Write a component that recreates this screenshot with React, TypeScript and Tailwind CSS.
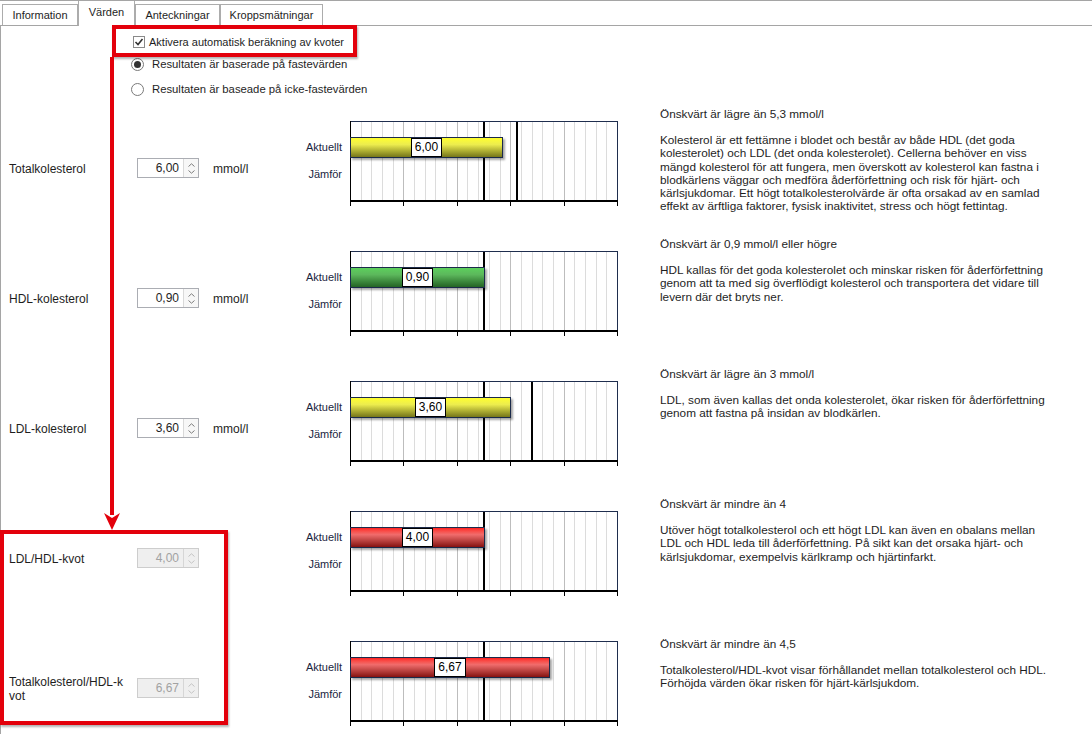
import { FC, ReactNode } from "react";
import clsx from "clsx";

type BarColor = "yellow" | "green" | "red";

interface Row {
  label: ReactNode;
  value: string;
  unit: boolean;
  disabled: boolean;
  bar: number;
  marks: number[];
  color: BarColor;
  heading: string;
  text: string[];
  textTop: string;
}

const barClass: Record<BarColor, string> = {
  yellow: "bg-linear-to-b from-[#ffff2a] via-[#ecec4e] via-35% to-[#76761a]",
  green: "bg-linear-to-b from-[#5cd05c] via-[#5cb85c] via-35% to-[#246424]",
  red: "bg-linear-to-b from-[#ff1c1c] via-[#f06c6c] via-35% to-[#861010]",
};

const rows: Row[] = [
  {
    label: "Totalkolesterol",
    value: "6,00",
    unit: true,
    disabled: false,
    bar: 152,
    marks: [134, 167],
    color: "yellow",
    heading: "Önskvärt är lägre än 5,3 mmol/l",
    text: [
      "Kolesterol är ett fettämne i blodet och består av både HDL (det goda",
      "kolesterolet) och LDL (det onda kolesterolet). Cellerna behöver en viss",
      "mängd kolesterol för att fungera, men överskott av kolesterol kan fastna i",
      "blodkärlens väggar och medföra åderförfettning och risk för hjärt- och",
      "kärlsjukdomar. Ett högt totalkolesterolvärde är ofta orsakad av en samlad",
      "effekt av ärftliga faktorer, fysisk inaktivitet, stress och högt fettintag.",
    ],
    textTop: "pt-[1px]",
  },
  {
    label: "HDL-kolesterol",
    value: "0,90",
    unit: true,
    disabled: false,
    bar: 134,
    marks: [134],
    color: "green",
    heading: "Önskvärt är 0,9 mmol/l eller högre",
    text: [
      "HDL kallas för det goda kolesterolet och minskar risken för åderförfettning",
      "genom att ta med sig överflödigt kolesterol och transportera det vidare till",
      "levern där det bryts ner.",
    ],
    textTop: "pt-[1px]",
  },
  {
    label: "LDL-kolesterol",
    value: "3,60",
    unit: true,
    disabled: false,
    bar: 160,
    marks: [134, 182],
    color: "yellow",
    heading: "Önskvärt är lägre än 3 mmol/l",
    text: [
      "LDL, som även kallas det onda kolesterolet, ökar risken för åderförfettning",
      "genom att fastna på insidan av blodkärlen.",
    ],
    textTop: "pt-[1px]",
  },
  {
    label: "LDL/HDL-kvot",
    value: "4,00",
    unit: false,
    disabled: true,
    bar: 134,
    marks: [134],
    color: "red",
    heading: "Önskvärt är mindre än 4",
    text: [
      "Utöver högt totalkolesterol och ett högt LDL kan även en obalans mellan",
      "LDL och HDL leda till åderförfettning. På sikt kan det orsaka hjärt- och",
      "kärlsjukdomar, exempelvis kärlkramp och hjärtinfarkt.",
    ],
    textTop: "pt-[1px]",
  },
  {
    label: (
      <>
        Totalkolesterol/HDL-k
        <br />
        vot
      </>
    ),
    value: "6,67",
    unit: false,
    disabled: true,
    bar: 199,
    marks: [134],
    color: "red",
    heading: "Önskvärt är mindre än 4,5",
    text: [
      "Totalkolesterol/HDL-kvot visar förhållandet mellan totalkolesterol och HDL.",
      "Förhöjda värden ökar risken för hjärt-kärlsjukdom.",
    ],
    textTop: "pt-[11px]",
  },
];

const tabs = [
  { name: "Information", w: "w-[76px]" },
  { name: "Värden", w: "w-[57px]" },
  { name: "Anteckningar", w: "w-[85px]" },
  { name: "Kroppsmätningar", w: "w-[103px]" },
];

const Spinner: FC<{ value: string; disabled: boolean }> = ({ value, disabled }) => {
  const arrow = disabled ? "#c4c4c4" : "#7c7c7c";
  return (
    <div
      className={clsx(
        "flex h-[20px] w-[62px] border",
        disabled ? "border-[#cdcdcd] bg-[#efefef] text-[#a2a2a2]" : "border-[#abadb3] bg-white text-[#1e1e1e]"
      )}
    >
      <div className="flex-1 pr-[4px] text-right text-[12px] leading-[18px]">{value}</div>
      <div
        className={clsx(
          "flex w-[15px] flex-col items-center justify-center gap-[3px] border-l",
          disabled ? "border-[#d6d6d6]" : "border-[#d9d9d9] bg-[#f7f7f7]"
        )}
      >
        <svg width="7" height="4" viewBox="0 0 7 4">
          <path d="M0.5 3.5 L3.5 0.8 L6.5 3.5" fill="none" stroke={arrow} strokeWidth="1" />
        </svg>
        <svg width="7" height="4" viewBox="0 0 7 4">
          <path d="M0.5 0.5 L3.5 3.2 L6.5 0.5" fill="none" stroke={arrow} strokeWidth="1" />
        </svg>
      </div>
    </div>
  );
};

// 25 minor steps across the plot, every fifth one darker
const gridX = Array.from({ length: 24 }, (_, i) => i + 1);

const Chart: FC<{ bar: number; marks: number[]; color: BarColor; value: string }> = ({ bar, marks, color, value }) => (
  <div className="relative h-[85px] w-[268px]">
    <svg width="268" height="85" className="block">
      <rect x="0.5" y="0.5" width="267" height="80" fill="#fff" stroke="#1f2e4e" />
      {gridX.map((i) => {
        const x = Math.round((i * 267) / 25) + 0.5;
        return (
          <line key={i} x1={x} x2={x} y1="1" y2="80" stroke={i % 5 === 0 ? "#bdbdbd" : "#dcdcdc"} strokeWidth="1" />
        );
      })}
      {marks.map((m) => (
        <line key={m} x1={m} x2={m} y1="1" y2="80" stroke="#000" strokeWidth="2" />
      ))}
      <line x1="0.5" x2="0.5" y1="0" y2="81" stroke="#000" strokeWidth="1" />
      <line x1="0" x2="268" y1="80" y2="80" stroke="#000" strokeWidth="2" />
      {[0, 5, 10, 15, 20, 25].map((i) => {
        const x = Math.min(Math.round((i * 267) / 25) + 0.5, 267.5);
        return <line key={i} x1={x} x2={x} y1="81" y2="85" stroke="#000" strokeWidth="1" />;
      })}
    </svg>
    <div
      className={clsx(
        "absolute left-0 top-[16px] flex h-[21px] items-center justify-center border border-[#1b2a4a] shadow-[2px_2px_2px_rgba(0,0,0,0.35)]",
        barClass[color]
      )}
      style={{ width: bar + 1 }}
    >
      <div className="h-[19px] border border-black bg-white px-[3px] text-[12px] leading-[17px] text-black">{value}</div>
    </div>
  </div>
);

export default function App() {
  return (
    <div className="relative h-[734px] w-[1092px] overflow-hidden bg-white font-['Liberation_Sans',Arial,sans-serif] text-[11px] text-[#1e1e1e]">
      {/* tab strip */}
      <div className="flex h-[26px] items-end border-y border-[#a5a5a5] pl-[2px]">
        {tabs.map((t) =>
          t.name === "Värden" ? (
            <div
              key={t.name}
              className={clsx(
                "relative -mb-px flex h-[25px] items-center justify-center border-x border-[#acacac] bg-white pb-[3px]",
                t.w
              )}
            >
              {t.name}
            </div>
          ) : (
            <div
              key={t.name}
              className={clsx(
                "flex h-[21px] items-center justify-center border-x border-t border-[#acacac] bg-white pt-px",
                t.w
              )}
            >
              {t.name}
            </div>
          )
        )}
      </div>

      <div className="h-[708px] border-l border-[#a5a5a5]">
        {/* calculation options */}
        <div className="h-[80px] pt-[10px]">
          <div className="ml-[132px] flex h-[12px] items-center gap-[4px]">
            <div className="flex h-[12px] w-[12px] items-center justify-center border border-[#8a8a8a] bg-white">
              <svg width="10" height="10" viewBox="0 0 10 10">
                <path d="M1.5 5 L4 7.5 L8.5 2" fill="none" stroke="#333" strokeWidth="1.6" />
              </svg>
            </div>
            <span className="whitespace-nowrap">Aktivera automatisk beräkning av kvoter</span>
          </div>
          <div className="ml-[130px] mt-[10px] flex h-[13px] items-center gap-[8px]">
            <div className="flex h-[13px] w-[13px] items-center justify-center rounded-full border border-[#7a7a7a] bg-white">
              <div className="h-[7px] w-[7px] rounded-full bg-[#333]" />
            </div>
            <span className="whitespace-nowrap text-[11.3px]">Resultaten är baserade på fastevärden</span>
          </div>
          <div className="ml-[130px] mt-[12px] flex h-[13px] items-center gap-[8px]">
            <div className="h-[13px] w-[13px] rounded-full border border-[#7a7a7a] bg-white" />
            <span className="whitespace-nowrap text-[11.3px]">Resultaten är baseade på icke-fastevärden</span>
          </div>
        </div>

        {rows.map((r, idx) => (
          <div key={idx} className="flex h-[130px]">
            <div className="mt-[49px] flex h-[28px] w-[136px] items-center pl-[8px] text-[12px] leading-[14px]">
              <span>{r.label}</span>
            </div>
            <div className="mt-[52px]">
              <Spinner value={r.value} disabled={r.disabled} />
            </div>
            <div className="mt-[56px] w-[97px] pl-[14px] text-[12px] leading-[14px]">{r.unit ? "mmol/l" : ""}</div>
            <div className="mt-[15px] flex">
              <div className="w-[54px] pr-[8px] pt-[19px] text-right leading-[14px] text-[#1a2540]">
                <div>Aktuellt</div>
                <div className="mt-[13px]">Jämför</div>
              </div>
              <Chart bar={r.bar} marks={r.marks} color={r.color} value={r.value} />
            </div>
            <div className={clsx("ml-[42px] whitespace-nowrap text-[11.75px] leading-[13.2px]", r.textTop)}>
              <div>{r.heading}</div>
              <div className="mt-[13px]">
                {r.text.map((line, i) => (
                  <div key={i}>{line}</div>
                ))}
              </div>
            </div>
          </div>
        ))}
      </div>

      {/* red call-out markings */}
      <div className="absolute left-[112px] top-[25px] h-[32px] w-[245px] border-4 border-[#e3000b] shadow-[1px_2px_2px_rgba(0,0,0,0.3)]" />
      <div className="absolute left-[110px] top-[57px] h-[458px] w-[4px] bg-[#e3000b]" />
      <svg className="absolute left-[104px] top-[512px]" width="16" height="18" viewBox="0 0 16 18">
        <polygon points="0,1 8,6 16,1 8,18" fill="#e3000b" />
      </svg>
      <div className="absolute left-0 top-[530px] h-[195px] w-[228px] border-4 border-[#e3000b] shadow-[1px_2px_2px_rgba(0,0,0,0.3)]" />
    </div>
  );
}
